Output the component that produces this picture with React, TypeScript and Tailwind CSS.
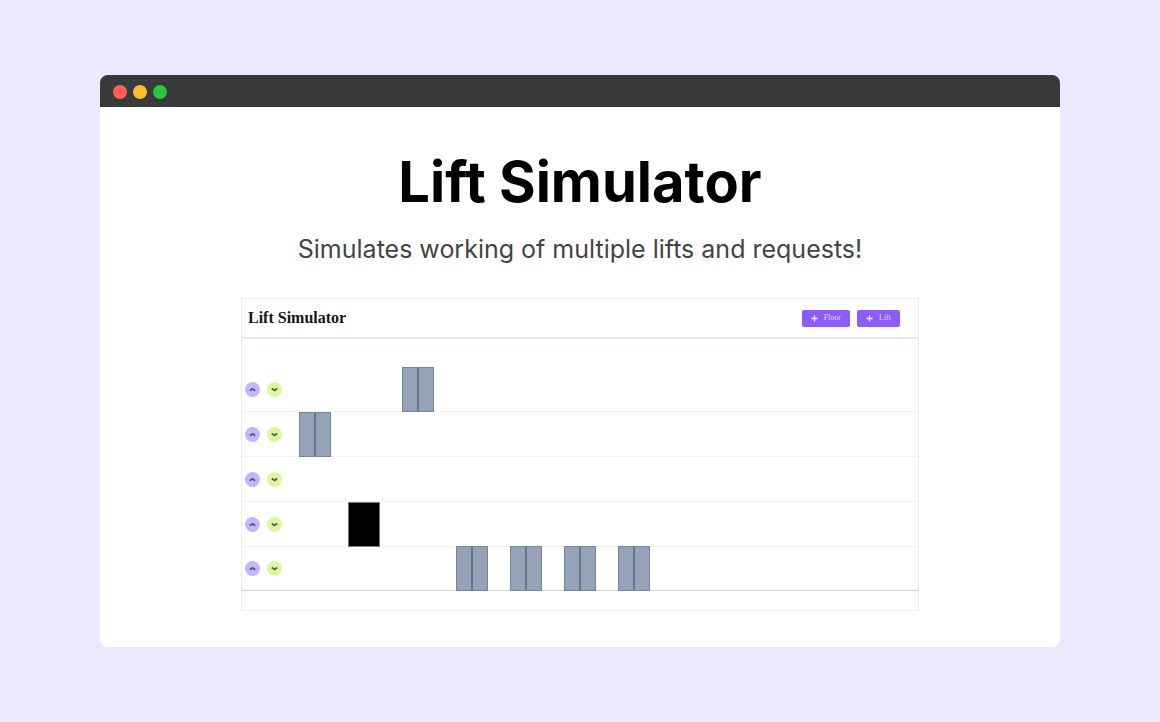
import React from "react";

type Lift = { column: string; open?: boolean };

const floors: { id: number; lifts: Lift[] }[] = [
  { id: 5, lifts: [{ column: "col-start-3" }] },
  { id: 4, lifts: [{ column: "col-start-1" }] },
  { id: 3, lifts: [] },
  { id: 2, lifts: [{ column: "col-start-2", open: true }] },
  {
    id: 1,
    lifts: [
      { column: "col-start-4" },
      { column: "col-start-5" },
      { column: "col-start-6" },
      { column: "col-start-7" },
    ],
  },
];

function Chevron({ up }: { up?: boolean }) {
  return (
    <svg viewBox="0 0 15 15" className="size-[15px]" fill="none" stroke="#5a5470" strokeWidth="1.7" aria-hidden="true">
      <path d={up ? "M4.8 8.7 7.5 6.7l2.7 2" : "M4.8 6.5 7.5 8.5l2.7-2"} />
    </svg>
  );
}

function AddButton({ label }: { label: string }) {
  return (
    <button
      type="button"
      className="flex h-[17px] items-center gap-1.5 rounded-xs bg-[#8b5cf6] px-[9px] font-['Liberation_Serif',serif] text-[8px] leading-none text-[#e4d9fd]"
    >
      <svg viewBox="0 0 7 7" className="size-[7px]" stroke="#eee7fe" strokeWidth="1.3" aria-hidden="true">
        <path d="M3.5 .5v6M.5 3.5h6" />
      </svg>
      {label}
    </button>
  );
}

function LiftCar({ column, open }: Lift) {
  if (open) {
    return <div className={`${column} h-[45px] w-8 border border-[#777] bg-black`} />;
  }
  return (
    <div className={`${column} flex h-[45px] w-8 border border-[#75859d] bg-[#94a3b8]`}>
      <div className="w-[15px] border-r border-[#64748b]" />
      <div className="flex-1 border-l border-[#64748b]" />
    </div>
  );
}

function Simulator() {
  return (
    <section className="mx-auto w-full max-w-[678px] border border-[#ececef] bg-white pb-[19px]">
      <header className="flex h-10 items-center justify-between border-b-2 border-[#e2e6f0] pr-[18px] pl-1.5">
        <h2 className="font-['Liberation_Serif',serif] text-[16px] leading-5 font-bold text-[#151515]">
          Lift Simulator
        </h2>
        <div className="flex gap-[7px]">
          <AddButton label="Floor" />
          <AddButton label="Lift" />
        </div>
      </header>
      <div className="pt-7">
        {floors.map((floor) => (
          <div
            key={floor.id}
            className="flex h-[45px] items-center border-b border-[#f1f1f6] pl-[3px] last:h-11 last:border-[#d4d4d8]"
          >
            <div className="flex w-[54px] gap-[7px]">
              <button
                type="button"
                aria-label={`Call lift up from floor ${floor.id}`}
                className="size-[15px] rounded-full bg-[#c4b5fd]"
              >
                <Chevron up />
              </button>
              <button
                type="button"
                aria-label={`Call lift down from floor ${floor.id}`}
                className="size-[15px] rounded-full bg-[#d9f99d]"
              >
                <Chevron />
              </button>
            </div>
            <div className="-my-px grid grid-cols-[49px_repeat(6,54px)]">
              {floor.lifts.map((lift) => (
                <LiftCar key={lift.column} {...lift} />
              ))}
            </div>
          </div>
        ))}
      </div>
    </section>
  );
}

export default function App() {
  return (
    <div className="flex min-h-screen flex-col justify-center bg-[#ece9ff] px-[100px] py-[75px] font-[Inter,sans-serif]">
      <main className="w-full overflow-hidden rounded-lg bg-white">
        <div className="flex h-8 items-center gap-1.5 bg-[#38393b] px-[13px] pt-0.5">
          <span className="size-3.5 rounded-full bg-[#ff5f57]" />
          <span className="size-3.5 rounded-full bg-[#ffbd2e]" />
          <span className="size-3.5 rounded-full bg-[#28c940]" />
        </div>
        <div className="px-8 pt-[43px] pb-9 text-center">
          <h1 className="text-[56px] leading-16 font-bold text-black">Lift Simulator</h1>
          <p className="mt-[19px] mb-[33px] text-[25px] leading-8 text-[#444]">
            Simulates working of multiple lifts and requests!
          </p>
          <Simulator />
        </div>
      </main>
    </div>
  );
}
